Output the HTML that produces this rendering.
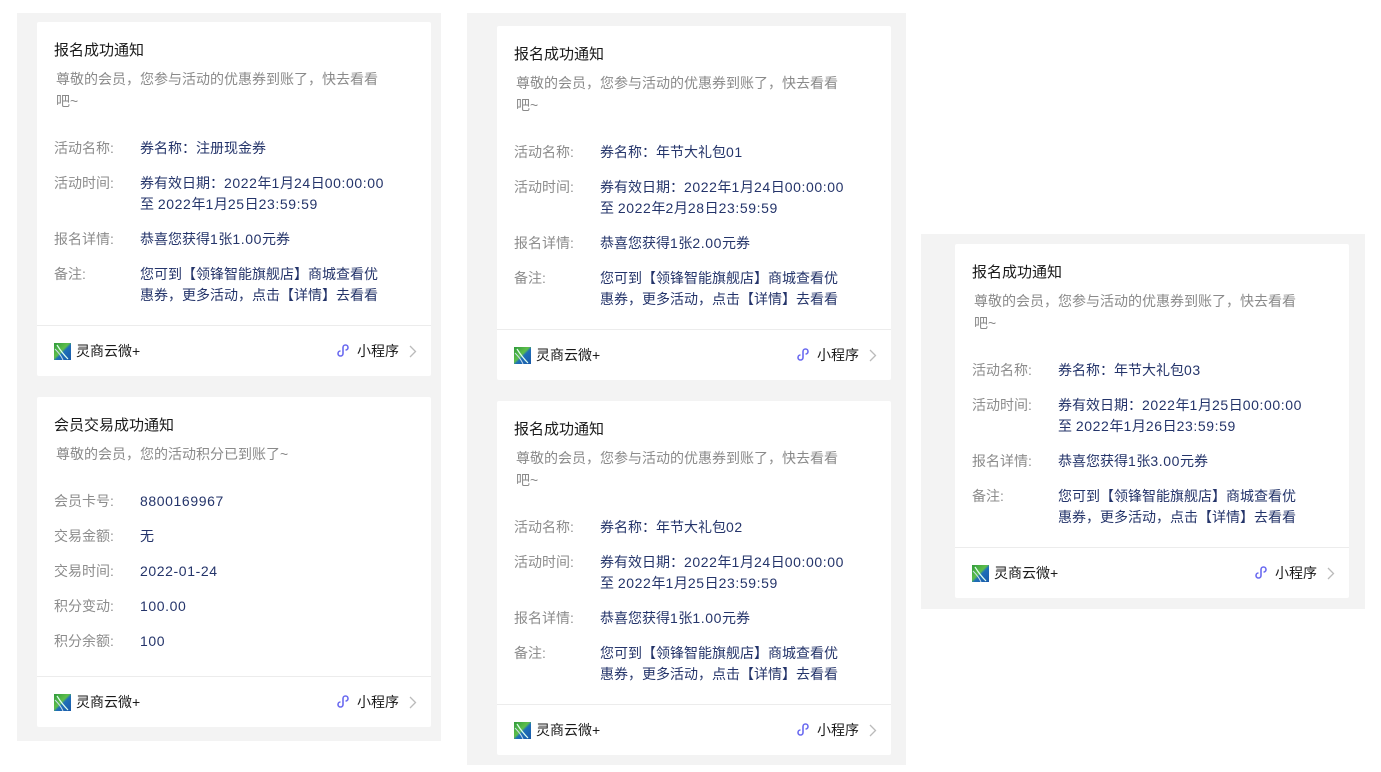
<!DOCTYPE html>
<html><head><meta charset="utf-8"><style>
*{margin:0;padding:0;box-sizing:border-box}
body{width:1381px;height:772px;background:#fff;position:relative;font-family:"Liberation Sans","Noto Sans CJK SC",sans-serif;overflow:hidden}
.g{position:absolute;background:#f3f3f3}
.c{position:absolute;background:#fff;width:394px;border-radius:2px}
.b{padding:18px 17px 19px 17px}
.t{font-size:15px;line-height:22px;color:#1a1a1a}
.d{margin-top:6px;font-size:14px;line-height:22px;color:#8a8a8a;padding-left:2px;white-space:nowrap}
.rows{margin-top:26px}
.r{display:flex;font-size:14px;line-height:21px;margin-bottom:14px;white-space:nowrap}
.r:last-child{margin-bottom:0}
.l{width:86px;flex:none;color:#8c8c8c}
.v{color:#24346a}
.n{letter-spacing:0.6px}
.f{border-top:1px solid #ececec;height:51px;display:flex;align-items:center;padding:0 14px 0 17px;font-size:14px;color:#1a1a1a}
.lg{width:17px;height:17px;margin-right:5px;background:linear-gradient(135deg,#2f9a3c 0%,#5fbf4a 45%,#1f6fb8 55%,#1858a8 100%);position:relative;overflow:hidden}
.sp{flex:1}
.mp{margin-right:6px}
.ch{margin-left:10px}
</style></head><body>
<div class="g" style="left:17px;top:13px;width:424px;height:728px"></div>
<div class="g" style="left:467px;top:13px;width:439px;height:752px"></div>
<div class="g" style="left:921px;top:234px;width:444px;height:375px"></div>

<!-- card1 -->
<div class="c" style="left:37px;top:22px">
<div class="b"><div class="t">报名成功通知</div>
<div class="d">尊敬的会员，您参与活动的优惠券到账了，快去看看<br>吧~</div>
<div class="rows">
<div class="r"><div class="l">活动名称:</div><div class="v">券名称：注册现金券</div></div>
<div class="r"><div class="l">活动时间:</div><div class="v">券有效日期：<span class="n">2022</span>年<span class="n">1</span>月<span class="n">24</span>日<span class="n">00:00:00</span><br>至 <span class="n">2022</span>年<span class="n">1</span>月<span class="n">25</span>日<span class="n">23:59:59</span></div></div>
<div class="r"><div class="l">报名详情:</div><div class="v">恭喜您获得<span class="n">1</span>张<span class="n">1.00</span>元券</div></div>
<div class="r"><div class="l">备注:</div><div class="v">您可到【领锋智能旗舰店】商城查看优<br>惠券，更多活动，点击【详情】去看看</div></div>
</div></div>
<div class="f"><div class="lg"><svg width="17" height="17"><path d="M3 2 Q8 10 14 16" stroke="#dfe" stroke-width="1.2" fill="none"/><path d="M1 6 Q7 12 9 17" stroke="#cde" stroke-width="1" fill="none"/></svg></div>灵商云微+<div class="sp"></div><svg class="mp" width="14" height="14" viewBox="0 0 14 14"><path d="M6 3.5 A2.5 2.5 0 1 1 8.5 6 M6 3.5 V9.5 A2.5 2.5 0 1 1 3.5 7" stroke="#6b6bf0" stroke-width="1.6" fill="none"/></svg>小程序<svg class="ch" width="8" height="13" viewBox="0 0 8 13"><path d="M1 1 L6.5 6.5 L1 12" stroke="#bbb" stroke-width="1.3" fill="none"/></svg></div>
</div>

<!-- card2 -->
<div class="c" style="left:37px;top:397px">
<div class="b" style="padding-bottom:24px"><div class="t">会员交易成功通知</div>
<div class="d">尊敬的会员，您的活动积分已到账了~</div>
<div class="rows">
<div class="r"><div class="l">会员卡号:</div><div class="v n">8800169967</div></div>
<div class="r"><div class="l">交易金额:</div><div class="v">无</div></div>
<div class="r"><div class="l">交易时间:</div><div class="v n">2022-01-24</div></div>
<div class="r"><div class="l">积分变动:</div><div class="v n">100.00</div></div>
<div class="r"><div class="l">积分余额:</div><div class="v n">100</div></div>
</div></div>
<div class="f"><div class="lg"><svg width="17" height="17"><path d="M3 2 Q8 10 14 16" stroke="#dfe" stroke-width="1.2" fill="none"/><path d="M1 6 Q7 12 9 17" stroke="#cde" stroke-width="1" fill="none"/></svg></div>灵商云微+<div class="sp"></div><svg class="mp" width="14" height="14" viewBox="0 0 14 14"><path d="M6 3.5 A2.5 2.5 0 1 1 8.5 6 M6 3.5 V9.5 A2.5 2.5 0 1 1 3.5 7" stroke="#6b6bf0" stroke-width="1.6" fill="none"/></svg>小程序<svg class="ch" width="8" height="13" viewBox="0 0 8 13"><path d="M1 1 L6.5 6.5 L1 12" stroke="#bbb" stroke-width="1.3" fill="none"/></svg></div>
</div>

<!-- card3 -->
<div class="c" style="left:497px;top:26px">
<div class="b"><div class="t">报名成功通知</div>
<div class="d">尊敬的会员，您参与活动的优惠券到账了，快去看看<br>吧~</div>
<div class="rows">
<div class="r"><div class="l">活动名称:</div><div class="v">券名称：年节大礼包<span class="n">01</span></div></div>
<div class="r"><div class="l">活动时间:</div><div class="v">券有效日期：<span class="n">2022</span>年<span class="n">1</span>月<span class="n">24</span>日<span class="n">00:00:00</span><br>至 <span class="n">2022</span>年<span class="n">2</span>月<span class="n">28</span>日<span class="n">23:59:59</span></div></div>
<div class="r"><div class="l">报名详情:</div><div class="v">恭喜您获得<span class="n">1</span>张<span class="n">2.00</span>元券</div></div>
<div class="r"><div class="l">备注:</div><div class="v">您可到【领锋智能旗舰店】商城查看优<br>惠券，更多活动，点击【详情】去看看</div></div>
</div></div>
<div class="f"><div class="lg"><svg width="17" height="17"><path d="M3 2 Q8 10 14 16" stroke="#dfe" stroke-width="1.2" fill="none"/><path d="M1 6 Q7 12 9 17" stroke="#cde" stroke-width="1" fill="none"/></svg></div>灵商云微+<div class="sp"></div><svg class="mp" width="14" height="14" viewBox="0 0 14 14"><path d="M6 3.5 A2.5 2.5 0 1 1 8.5 6 M6 3.5 V9.5 A2.5 2.5 0 1 1 3.5 7" stroke="#6b6bf0" stroke-width="1.6" fill="none"/></svg>小程序<svg class="ch" width="8" height="13" viewBox="0 0 8 13"><path d="M1 1 L6.5 6.5 L1 12" stroke="#bbb" stroke-width="1.3" fill="none"/></svg></div>
</div>

<!-- card4 -->
<div class="c" style="left:497px;top:401px">
<div class="b"><div class="t">报名成功通知</div>
<div class="d">尊敬的会员，您参与活动的优惠券到账了，快去看看<br>吧~</div>
<div class="rows">
<div class="r"><div class="l">活动名称:</div><div class="v">券名称：年节大礼包<span class="n">02</span></div></div>
<div class="r"><div class="l">活动时间:</div><div class="v">券有效日期：<span class="n">2022</span>年<span class="n">1</span>月<span class="n">24</span>日<span class="n">00:00:00</span><br>至 <span class="n">2022</span>年<span class="n">1</span>月<span class="n">25</span>日<span class="n">23:59:59</span></div></div>
<div class="r"><div class="l">报名详情:</div><div class="v">恭喜您获得<span class="n">1</span>张<span class="n">1.00</span>元券</div></div>
<div class="r"><div class="l">备注:</div><div class="v">您可到【领锋智能旗舰店】商城查看优<br>惠券，更多活动，点击【详情】去看看</div></div>
</div></div>
<div class="f"><div class="lg"><svg width="17" height="17"><path d="M3 2 Q8 10 14 16" stroke="#dfe" stroke-width="1.2" fill="none"/><path d="M1 6 Q7 12 9 17" stroke="#cde" stroke-width="1" fill="none"/></svg></div>灵商云微+<div class="sp"></div><svg class="mp" width="14" height="14" viewBox="0 0 14 14"><path d="M6 3.5 A2.5 2.5 0 1 1 8.5 6 M6 3.5 V9.5 A2.5 2.5 0 1 1 3.5 7" stroke="#6b6bf0" stroke-width="1.6" fill="none"/></svg>小程序<svg class="ch" width="8" height="13" viewBox="0 0 8 13"><path d="M1 1 L6.5 6.5 L1 12" stroke="#bbb" stroke-width="1.3" fill="none"/></svg></div>
</div>

<!-- card5 -->
<div class="c" style="left:955px;top:244px">
<div class="b"><div class="t">报名成功通知</div>
<div class="d">尊敬的会员，您参与活动的优惠券到账了，快去看看<br>吧~</div>
<div class="rows">
<div class="r"><div class="l">活动名称:</div><div class="v">券名称：年节大礼包<span class="n">03</span></div></div>
<div class="r"><div class="l">活动时间:</div><div class="v">券有效日期：<span class="n">2022</span>年<span class="n">1</span>月<span class="n">25</span>日<span class="n">00:00:00</span><br>至 <span class="n">2022</span>年<span class="n">1</span>月<span class="n">26</span>日<span class="n">23:59:59</span></div></div>
<div class="r"><div class="l">报名详情:</div><div class="v">恭喜您获得<span class="n">1</span>张<span class="n">3.00</span>元券</div></div>
<div class="r"><div class="l">备注:</div><div class="v">您可到【领锋智能旗舰店】商城查看优<br>惠券，更多活动，点击【详情】去看看</div></div>
</div></div>
<div class="f"><div class="lg"><svg width="17" height="17"><path d="M3 2 Q8 10 14 16" stroke="#dfe" stroke-width="1.2" fill="none"/><path d="M1 6 Q7 12 9 17" stroke="#cde" stroke-width="1" fill="none"/></svg></div>灵商云微+<div class="sp"></div><svg class="mp" width="14" height="14" viewBox="0 0 14 14"><path d="M6 3.5 A2.5 2.5 0 1 1 8.5 6 M6 3.5 V9.5 A2.5 2.5 0 1 1 3.5 7" stroke="#6b6bf0" stroke-width="1.6" fill="none"/></svg>小程序<svg class="ch" width="8" height="13" viewBox="0 0 8 13"><path d="M1 1 L6.5 6.5 L1 12" stroke="#bbb" stroke-width="1.3" fill="none"/></svg></div>
</div>
</body></html>
